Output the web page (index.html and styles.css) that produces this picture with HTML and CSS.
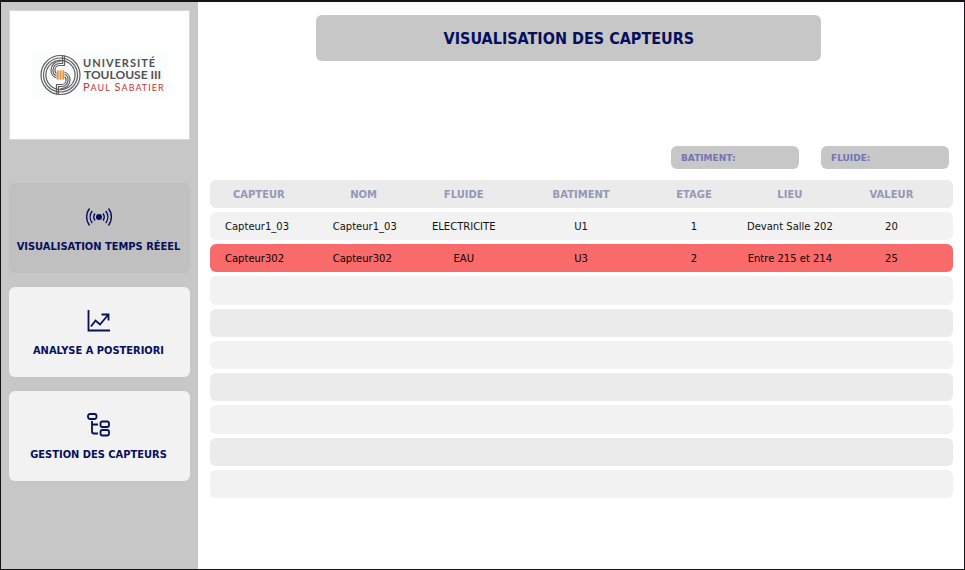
FILE: index.html
```html
<!DOCTYPE html>
<html lang="fr">
<head>
<meta charset="utf-8">
<title>Visualisation des capteurs</title>
<link rel="stylesheet" href="styles.css">
</head>
<body>
<div class="app">
  <aside class="sidebar">
    <div class="brand">
      <svg class="logo" viewBox="0 0 134 46" role="img" aria-label="Université Toulouse III Paul Sabatier">
        <rect class="logo-bg" width="134" height="46"/>
        <g class="rings">
          <circle cx="27.500" cy="23" r="19.500"/>
          <circle cx="27.500" cy="23" r="17"/>
          <circle cx="27.500" cy="23" r="14.600"/>
          <path d="M31.500 4v9.500h-5a4.500 4.500 0 0 0-4.500 4.500a4 4 0 0 0 3 4"/>
          <path d="M29.500 4v7.500h-3a6.500 6.500 0 0 0-6.500 6.500a6 6 0 0 0 4 6"/>
          <path d="M27.500 9.500h-1a8.500 8.500 0 0 0-8.500 8.500a8 8 0 0 0 6 8"/>
          <path d="M23.500 42v-9.500h5a4.500 4.500 0 0 0 4.500-4.500a4 4 0 0 0-3-4"/>
          <path d="M25.500 42v-7.500h3a6.500 6.500 0 0 0 6.500-6.500a6 6 0 0 0-4-6"/>
          <path d="M27.500 36.500h1a8.500 8.500 0 0 0 8.500-8.500a8 8 0 0 0-6-8"/>
        </g>
        <rect class="core-bg" x="23.500" y="18" width="8" height="10"/>
        <path class="core" d="M24.800 18.500v9M27.500 18.500v9M30.200 18.500v9"/>
        <text class="logo-top" x="50" y="15">UNIVERSITÉ</text>
        <text class="logo-mid" x="51" y="27">TOULOUSE III</text>
        <text class="logo-low" x="50" y="39">P<tspan class="small">AUL</tspan> S<tspan class="small">ABATIER</tspan></text>
      </svg>
    </div>
    <nav class="menu">
      <a class="item active" href="#" aria-current="page">
        <svg class="icon" viewBox="0 0 26 26" aria-hidden="true">
          <circle class="dot" cx="13" cy="13" r="3"/>
          <path class="wave" d="M9 9.500a6 6 0 0 0 0 7M6.200 7a10 10 0 0 0 0 12M3.500 4.500a14 14 0 0 0 0 17M17 9.500a6 6 0 0 1 0 7M19.800 7a10 10 0 0 1 0 12M22.500 4.500a14 14 0 0 1 0 17"/>
        </svg>
        <span>VISUALISATION TEMPS RÉEEL</span>
      </a>
      <a class="item" href="#">
        <svg class="icon" viewBox="0 0 26 26" aria-hidden="true">
          <path class="line" d="M2.500 2v20.500h21.500M5 18.500l4.500-6 4.500 4 8-9.500M15.500 6.500h7v6"/>
        </svg>
        <span>ANALYSE A POSTERIORI</span>
      </a>
      <a class="item" href="#">
        <svg class="icon" viewBox="0 0 26 26" aria-hidden="true">
          <rect class="line" x="2" y="2" width="8.500" height="5" rx="2"/>
          <path class="line" d="M6 9v10.500a2 2 0 0 0 2 2h4M6 12.500h6"/>
          <rect class="line" x="14.500" y="9.500" width="8.500" height="5.500" rx="2"/>
          <rect class="line" x="14.500" y="18" width="8.500" height="5.500" rx="2"/>
        </svg>
        <span>GESTION DES CAPTEURS</span>
      </a>
    </nav>
  </aside>
  <main class="content">
    <h1 class="title">VISUALISATION DES CAPTEURS</h1>
    <form class="filters">
      <div class="filter"><label for="batiment">BATIMENT:</label><input id="batiment" type="text"></div>
      <div class="filter"><label for="fluide">FLUIDE:</label><input id="fluide" type="text"></div>
    </form>
    <table class="sensors">
      <colgroup><col class="c-sensor"><col class="c-name"><col class="c-fluid"><col class="c-building"><col class="c-floor"><col class="c-place"><col class="c-value"></colgroup>
      <thead>
        <tr><th>CAPTEUR</th><th>NOM</th><th>FLUIDE</th><th>BATIMENT</th><th>ETAGE</th><th>LIEU</th><th>VALEUR</th></tr>
      </thead>
      <tbody>
        <tr><td>Capteur1_03</td><td>Capteur1_03</td><td>ELECTRICITE</td><td>U1</td><td>1</td><td>Devant Salle 202</td><td>20</td></tr>
        <tr class="alert"><td>Capteur302</td><td>Capteur302</td><td>EAU</td><td>U3</td><td>2</td><td>Entre 215 et 214</td><td>25</td></tr>
        <tr><td></td><td></td><td></td><td></td><td></td><td></td><td></td></tr>
        <tr><td></td><td></td><td></td><td></td><td></td><td></td><td></td></tr>
        <tr><td></td><td></td><td></td><td></td><td></td><td></td><td></td></tr>
        <tr><td></td><td></td><td></td><td></td><td></td><td></td><td></td></tr>
        <tr><td></td><td></td><td></td><td></td><td></td><td></td><td></td></tr>
        <tr><td></td><td></td><td></td><td></td><td></td><td></td><td></td></tr>
        <tr><td></td><td></td><td></td><td></td><td></td><td></td><td></td></tr>
      </tbody>
    </table>
  </main>
</div>
</body>
</html>
```
FILE: styles.css
```css
* { box-sizing: border-box; }

body {
  margin: 0;
  font-family: "DejaVu Sans", Verdana, sans-serif;
  font-size: 10px;
  color: #111;
  background: #fff;
}

.app {
  display: flex;
  min-height: 100vh;
  border: 1px solid #151316;
  border-top-width: 2px;
}

.sidebar {
  flex: 0 0 197px;
  padding: 8px;
  background: #c7c7c7;
}

.brand {
  display: flex;
  align-items: center;
  justify-content: center;
  height: 130px;
  background: #fff;
  border: 1px solid #d8d8d8;
}

.logo { width: 134px; height: 46px; }
.logo-bg { fill: #f9fdfc; }
.rings { fill: none; stroke: #625d60; stroke-width: 1.2; }
.core-bg { fill: #fbe3c4; }
.core { stroke: #f0923a; stroke-width: 1.6; }
.logo text { font-family: Lato, sans-serif; }
.logo-top { font-size: 11px; font-weight: bold; letter-spacing: 1px; fill: #555053; }
.logo-mid { font-size: 12px; font-weight: bold; fill: #555053; }
.logo-low { font-size: 11px; letter-spacing: 1px; fill: #c8353b; }
.logo-low .small { font-size: 9px; }

.menu {
  display: flex;
  flex-direction: column;
  gap: 14px;
  margin-top: 43px;
}

.item {
  display: flex;
  flex-direction: column;
  align-items: center;
  gap: 10px;
  height: 90px;
  padding: 21px 2px 0 0;
  border-radius: 6px;
  background: #f2f2f2;
  color: #050f5c;
  font-family: "DejaVu Sans Condensed", "DejaVu Sans", sans-serif;
  font-size: 11px;
  font-weight: bold;
  line-height: 14px;
  text-decoration: none;
  white-space: nowrap;
}

.item.active { background: #c0c0c0; }

.icon { width: 26px; height: 26px; }
.dot { fill: #050f5c; }
.wave { fill: none; stroke: #050f5c; stroke-width: 1.4; }
.line { fill: none; stroke: #050f5c; stroke-width: 1.8; }

.content {
  flex: 1;
  min-width: 0;
  padding: 13px 11px 0 12px;
}

.title {
  width: 68%;
  margin: 0 auto 0 14.3%;
  padding-top: 2px;
  border-radius: 6px;
  background: #c7c7c7;
  color: #050f5c;
  font-family: "DejaVu Sans Condensed", "DejaVu Sans", sans-serif;
  font-size: 16px;
  line-height: 44px;
  text-align: center;
}

.filters {
  display: flex;
  justify-content: flex-end;
  gap: 22px;
  margin-top: 85px;
  padding-right: 4px;
}

.filter {
  display: flex;
  align-items: center;
  width: 128px;
  height: 23px;
  padding: 0 10px;
  border-radius: 6px;
  background: #c7c7c7;
  color: #7474b4;
  font-size: 9px;
  font-weight: bold;
}

.filter input {
  flex: 1;
  min-width: 0;
  padding: 0 4px;
  border: 0;
  outline: 0;
  background: transparent;
  color: inherit;
  font: inherit;
}

.sensors {
  width: 100%;
  height: 326px;
  margin-top: 7px;
  border-collapse: separate;
  border-spacing: 0 4px;
  table-layout: fixed;
}

.c-sensor { width: 14.5%; }
.c-name { width: 13.7%; }
.c-fluid { width: 11.9%; }
.c-building { width: 19.7%; }
.c-floor { width: 10.7%; }
.c-place { width: 15.1%; }
.c-value { width: 14.4%; }

.sensors th,
.sensors td {
  height: 28px;
  padding: 0;
  text-align: center;
  white-space: nowrap;
  background: #f2f2f2;
}

.sensors th,
.sensors tr:nth-child(even) td { background: #ebebeb; }
.sensors tbody tr.alert td { background: #f96a6b; color: #100; }

.sensors th { color: #9497b8; font-weight: bold; }
.sensors th:nth-child(-n+2) { padding-right: 10px; }
.sensors td:nth-child(-n+2) { padding-left: 15px; text-align: left; }
.sensors th:last-child,
.sensors td:last-child { padding-right: 16px; }

.sensors tr > :first-child { border-radius: 6px 0 0 6px; }
.sensors tr > :last-child { border-radius: 0 6px 6px 0; }
```
